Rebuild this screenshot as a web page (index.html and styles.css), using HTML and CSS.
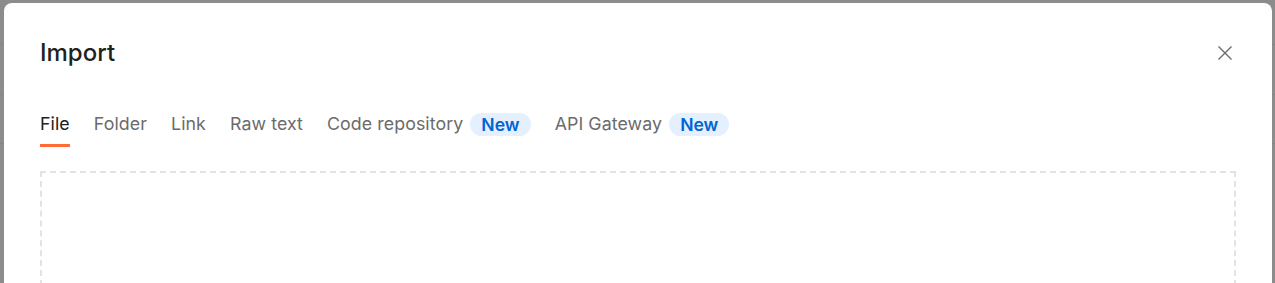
FILE: index.html
```html
<!DOCTYPE html>
<html lang="en">
<head>
<meta charset="utf-8">
<title>Import</title>
<link rel="stylesheet" href="styles.css">
</head>
<body>
<div class="dialog">
  <div class="header">
    <h1 class="title">Import</h1>
    <button class="close" aria-label="Close">
      <svg width="16" height="16" viewBox="0 0 16 16"><path d="M1.5 1.5 L14.5 14.5 M14.5 1.5 L1.5 14.5" stroke="#6b6b6b" stroke-width="1.4" fill="none"/></svg>
    </button>
  </div>
  <div class="tabs">
    <div class="tab active">File</div>
    <div class="tab">Folder</div>
    <div class="tab">Link</div>
    <div class="tab">Raw text</div>
    <div class="tab">Code repository <span class="badge">New</span></div>
    <div class="tab">API Gateway <span class="badge">New</span></div>
  </div>
  <div class="dropzone"></div>
</div>
</body>
</html>
```
FILE: styles.css
```css
html, body {
  margin: 0;
  height: 100%;
  overflow: hidden;
}
body {
  background-color: #8c8c8c;
  background-image:
    linear-gradient(#858585, #858585),
    linear-gradient(#858585, #858585),
    linear-gradient(#858585, #858585);
  background-size: 100% 1px;
  background-repeat: no-repeat;
  background-position: 0 44px, 0 94px, 0 143px;
  font-family: Inter, "Noto Sans", sans-serif;
  padding: 3px 3px 0 4px;
  box-sizing: border-box;
}
.dialog {
  background: #ffffff;
  border-radius: 8px 8px 0 0;
  height: 400px;
  padding: 32px 36px 0 36px;
  box-sizing: border-box;
}
.header {
  display: flex;
  align-items: center;
  justify-content: space-between;
  height: 36px;
}
.title {
  margin: 0;
  font-size: 24px;
  font-weight: 500;
  color: #212121;
  line-height: 28px;
}
.close {
  border: 0;
  background: none;
  padding: 0;
  width: 16px;
  height: 16px;
  margin-right: 3px;
  display: flex;
}
.tabs {
  display: flex;
  gap: 24px;
  margin-top: 41px;
}
.tab {
  font-size: 17.8px;
  letter-spacing: 0.08px;
  line-height: 24px;
  color: #6b6b6b;
  padding-bottom: 8px;
  border-bottom: 3px solid transparent;
  display: flex;
  align-items: center;
  gap: 7px;
  white-space: nowrap;
}
.tab.active {
  color: #212121;
  border-bottom-color: #ff6c37;
}
.badge {
  background: #e5f0ff;
  color: #0265d2;
  font-weight: 600;
  font-size: 17.6px;
  letter-spacing: 0;
  line-height: 23px;
  padding: 0 11px;
  border-radius: 12px;
}
.dropzone {
  margin-top: 24px;
  height: 200px;
  border: 2px dashed #e3e3e3;
}
```
